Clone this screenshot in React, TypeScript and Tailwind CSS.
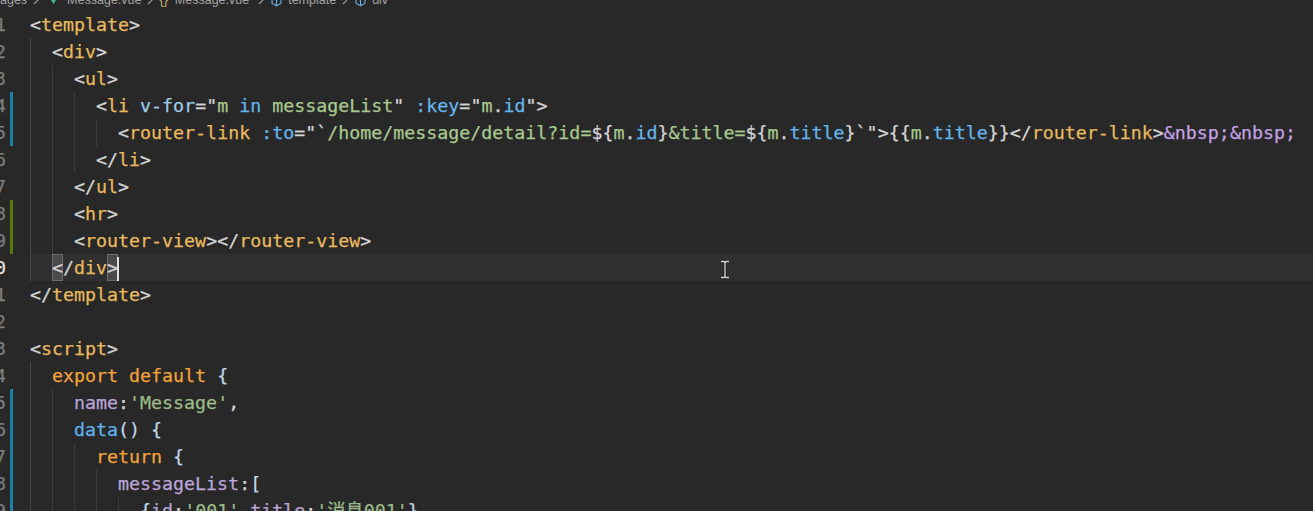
import React from 'react';

// token colours
const P = 'text-[#d4d4d4]'; // punctuation, brackets
const T = 'text-[#e8b95e]'; // tag names
const A = 'text-[#9fcbe6]'; // v- directives
const K = 'text-[#64b5ec]'; // :bind attrs, keywords in expr, props
const S = 'text-[#a8c98e]'; // strings / template vars
const N = 'text-[#c3a1e3]'; // entities
const O = 'text-[#f2a33a]'; // export / return
const L = 'text-[#bca5d9]'; // object keys
const F = 'text-[#5fb2ea]'; // function names
const B = 'text-[#c2d6ea]'; // braces
const G = 'text-[#9dbb8a]'; // js strings

type Seg = [string, string, boolean?];

interface CodeLine {
  n: number;
  ind: number;
  segs: Seg[];
  bar?: 'blue' | 'green';
  current?: boolean;
}

const lines: CodeLine[] = [
  { n: 1, ind: 0, segs: [['<', P], ['template', T], ['>', P]] },
  { n: 2, ind: 1, segs: [['<', P], ['div', T], ['>', P]] },
  { n: 3, ind: 2, segs: [['<', P], ['ul', T], ['>', P]] },
  {
    n: 4,
    ind: 3,
    bar: 'blue',
    segs: [
      ['<', P], ['li', T], [' ', P], ['v-for', A], ['=', P], ['"', P], ['m', S], [' ', P],
      ['in', K], [' ', P], ['messageList', S], ['"', P], [' ', P], [':key', K], ['=', P],
      ['"', P], ['m', S], ['.', P], ['id', K], ['"', P], ['>', P],
    ],
  },
  {
    n: 5,
    ind: 4,
    bar: 'blue',
    segs: [
      ['<', P], ['router-link', T], [' ', P], [':to', K], ['=', P], ['"`', P],
      ['/home/message/detail?id=', S], ['${', P], ['m', S], ['.', P], ['id', K], ['}', P],
      ['&title=', S], ['${', P], ['m', S], ['.', P], ['title', K], ['}', P], ['`"', P],
      ['>', P], ['{{', P], ['m', S], ['.', P], ['title', K], ['}}', P], ['</', P],
      ['router-link', T], ['>', P], ['&nbsp;&nbsp;', N],
    ],
  },
  { n: 6, ind: 3, segs: [['</', P], ['li', T], ['>', P]] },
  { n: 7, ind: 2, segs: [['</', P], ['ul', T], ['>', P]] },
  { n: 8, ind: 2, bar: 'green', segs: [['<', P], ['hr', T], ['>', P]] },
  {
    n: 9,
    ind: 2,
    bar: 'green',
    segs: [['<', P], ['router-view', T], ['></', P], ['router-view', T], ['>', P]],
  },
  { n: 10, ind: 1, current: true, segs: [['<', P, true], ['/', P], ['div', T], ['>', P, true]] },
  { n: 11, ind: 0, segs: [['</', P], ['template', T], ['>', P]] },
  { n: 12, ind: 0, segs: [] },
  { n: 13, ind: 0, segs: [['<', P], ['script', T], ['>', P]] },
  { n: 14, ind: 1, segs: [['export', O], [' ', P], ['default', O], [' ', P], ['{', B]] },
  { n: 15, ind: 2, bar: 'blue', segs: [['name', L], [':', P], ["'Message'", G], [',', P]] },
  { n: 16, ind: 2, bar: 'blue', segs: [['data', F], ['()', B], [' ', P], ['{', B]] },
  { n: 17, ind: 3, bar: 'blue', segs: [['return', O], [' ', P], ['{', B]] },
  { n: 18, ind: 4, bar: 'blue', segs: [['messageList', L], [':', P], ['[', B]] },
  {
    n: 19,
    ind: 5,
    bar: 'blue',
    segs: [
      ['{', B], ['id', L], [':', P], ["'001'", G], [',', P], ['title', L], [':', P],
      ["'消息001'", G], ['}', B], [',', P],
    ],
  },
];

function Chevron() {
  return (
    <svg width="8" height="10" viewBox="0 0 8 10" className="mx-[5px] shrink-0">
      <path d="M2 1l4 4-4 4" fill="none" stroke="#9a9a9a" strokeWidth="1.2" />
    </svg>
  );
}

function Cube() {
  return (
    <svg width="13" height="13" viewBox="0 0 16 16" className="mr-[5px] shrink-0">
      <path
        d="M8 1.5l5.5 3v7L8 14.5l-5.5-3v-7z M2.5 4.5L8 7.5l5.5-3 M8 7.5v7"
        fill="none"
        stroke="#6fb6f0"
        strokeWidth="1.3"
        strokeLinejoin="round"
      />
    </svg>
  );
}

function Breadcrumb() {
  return (
    <div className="h-[11px] overflow-hidden">
      <div className="-mt-[11px] flex h-[22px] items-center whitespace-nowrap font-['Liberation_Sans',Arial,sans-serif] text-[12.5px] text-[#a4a4a4]">
        <span>ages</span>
        <Chevron />
        <svg width="11" height="10" viewBox="0 0 12 10" className="ml-[3px] mr-[8px] shrink-0">
          <path d="M0.5 0.5h3L6 5l2.5-4.5h3L6 9.5z" fill="#41b883" />
          <path d="M3.5 0.5h2L6 1.5l0.5-1h2L6 5z" fill="#35495e" />
        </svg>
        <span>Message.vue</span>
        <Chevron />
        <span className="mr-[7px] text-[#c9b26a]">{'{}'}</span>
        <span>Message.vue</span>
        <span className="ml-[3px]">
          <Chevron />
        </span>
        <Cube />
        <span>template</span>
        <Chevron />
        <Cube />
        <span>div</span>
      </div>
    </div>
  );
}

function Line({ line }: { line: CodeLine }) {
  const barClass =
    line.bar === 'blue' ? 'bg-[#1b81a8]' : line.bar === 'green' ? 'bg-[#587c0c]' : '';

  return (
    <div className="flex h-[27px]">
      {/* gutter */}
      <div className="flex w-[30px] shrink-0">
        <div className="flex w-[6px] justify-end overflow-hidden">
          <span className={line.current ? 'text-[#e0e0e0]' : 'text-[#7d7d7d]'}>{line.n}</span>
        </div>
        <div className="w-[4px]" />
        <div className={`w-[3px] ${barClass}`} />
      </div>

      {/* code */}
      <div className={`flex-1 whitespace-pre ${line.current ? 'bg-[#2f2f2f]' : ''}`}>
        {line.segs.length > 0 &&
          Array.from({ length: line.ind }).map((_, i) => (
            <span
              key={i}
              className={`inline-block h-[27px] align-top ${
                i === 0 ? 'shadow-[inset_1px_0_0_#474747]' : 'shadow-[inset_1px_0_0_#3b3b3b]'
              }`}
            >
              {'  '}
            </span>
          ))}
        {line.segs.map(([text, color, boxed], i) =>
          boxed ? (
            <span
              key={i}
              className={`inline-block h-[27px] align-top bg-[#4a4a4a] shadow-[inset_0_0_0_1px_#6c6c6c] ${color}`}
            >
              {text}
            </span>
          ) : (
            <span key={i} className={color}>
              {text}
            </span>
          ),
        )}
        {line.current && (
          <span className="inline-block h-[24px] w-[2px] -ml-[1px] align-middle bg-[#e0e0e0]" />
        )}
      </div>
    </div>
  );
}

export default function App() {
  return (
    <div className="relative h-[511px] w-[1313px] overflow-hidden bg-[#282828]">
      <Breadcrumb />

      <div className="font-['DejaVu_Sans_Mono','Noto_Sans_CJK_SC',monospace] text-[18.3px] leading-[27px] [-webkit-text-stroke:0.25px]">
        {lines.map((line) => (
          <Line key={line.n} line={line} />
        ))}
      </div>

      {/* mouse pointer */}
      <svg
        width="10"
        height="19"
        viewBox="0 0 10 19"
        className="pointer-events-none absolute left-[720px] top-[260px]"
      >
        <path d="M1 1.5h3l1 1 1-1h3 M5 2.5v14 M1 17.5h3l1-1 1 1h3" fill="none" stroke="#1a1a1a" strokeWidth="3" />
        <path d="M1 1.5h3l1 1 1-1h3 M5 2.5v14 M1 17.5h3l1-1 1 1h3" fill="none" stroke="#d8d8d8" strokeWidth="1.3" />
      </svg>
    </div>
  );
}
